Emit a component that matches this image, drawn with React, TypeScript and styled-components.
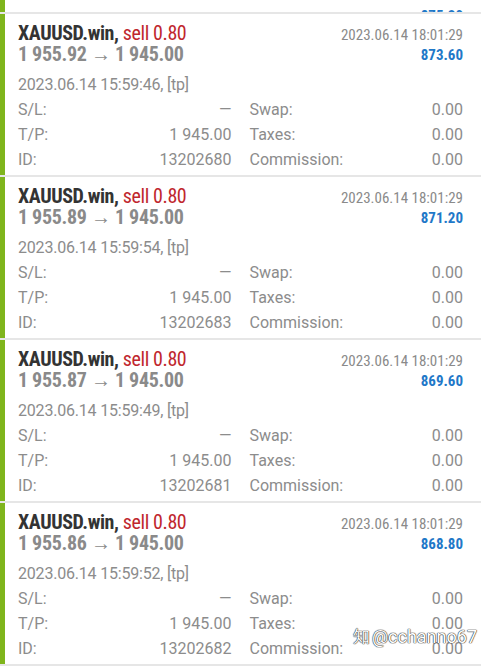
import styled, { createGlobalStyle } from "styled-components";

const Global = createGlobalStyle`
  html, body { margin: 0; padding: 0; background: #fff; }
  body { font-family: Roboto, "Liberation Sans", sans-serif; }
`;

const Page = styled.div`
  position: relative;
  width: 481px;
  height: 668px;
  overflow: hidden;
  background: #fff;
`;

const Card = styled.div<{ $h?: number }>`
  display: flex;
  border-bottom: 2px solid #e6e6e6;
  ${(p) => (p.$h ? `height: ${p.$h}px; overflow: hidden; align-items: flex-end;` : "")}
`;

const Bar = styled.div`
  width: 5px;
  flex: none;
  align-self: stretch;
  background: #7fb51c;
`;

const Body = styled.div`
  flex: 1;
  padding: 9px 18px 3px 13px;
`;

// the card above is scrolled almost out of view, only its last row's feet show
const PartialBody = styled.div`
  flex: 1;
  padding: 0 18px 0 13px;
  margin-bottom: -19px;
`;

const Head = styled.div`
  display: flex;
  justify-content: space-between;
  margin-bottom: 7px;
`;

const Title = styled.div`
  font-family: "Roboto Condensed", "Liberation Sans Narrow", Roboto, sans-serif;
  font-weight: 700;
  font-size: 20px;
  line-height: 21px;
  color: #333;
  letter-spacing: -0.4px;
`;

const Sell = styled.span`
  font-weight: 400;
  color: #c0262d;
`;

const Price = styled.div`
  font-family: "Roboto Condensed", "Liberation Sans Narrow", Roboto, sans-serif;
  font-weight: 700;
  font-size: 20px;
  line-height: 20px;
  color: #8a8a8a;
  letter-spacing: -0.3px;
`;

const Right = styled.div`
  display: flex;
  flex-direction: column;
  align-items: flex-end;
  padding-top: 2px;
`;

const Closed = styled.div`
  font-family: "Roboto Condensed", "Liberation Sans Narrow", Roboto, sans-serif;
  font-size: 15px;
  line-height: 20px;
  color: #8a8a8a;
`;

const Profit = styled.div`
  font-family: "Roboto Condensed", "Liberation Sans Narrow", Roboto, sans-serif;
  font-weight: 700;
  font-size: 15px;
  line-height: 20px;
  color: #1f78c8;
`;

const Line = styled.div`
  font-size: 16px;
  line-height: 25px;
  color: #8c8c8c;
  letter-spacing: -0.2px;
`;

const Grid = styled.div`
  display: grid;
  grid-template-columns: 1fr 1fr;
  column-gap: 18px;
`;

const Cell = styled.div`
  display: flex;
  justify-content: space-between;
  font-size: 16px;
  line-height: 25px;
  color: #8c8c8c;
`;

const Mark = styled.div`
  position: absolute;
  right: 4px;
  bottom: 20px;
  display: flex;
  align-items: center;
  gap: 2px;
  font-family: Roboto, sans-serif;
  font-size: 18px;
  color: #fff;
  text-shadow: 0 0 1px #333, 0 0 1px #333, 0 0 1px #333;
`;

const MarkLogo = styled.span`
  font-size: 17px;
`;

type Deal = {
  open: string;
  close: string;
  time: string;
  openTime: string;
  profit: string;
  id: string;
};

const deals: Deal[] = [
  { open: "1 955.92", close: "1 945.00", time: "2023.06.14 18:01:29", openTime: "2023.06.14 15:59:46", profit: "873.60", id: "13202680" },
  { open: "1 955.89", close: "1 945.00", time: "2023.06.14 18:01:29", openTime: "2023.06.14 15:59:54", profit: "871.20", id: "13202683" },
  { open: "1 955.87", close: "1 945.00", time: "2023.06.14 18:01:29", openTime: "2023.06.14 15:59:49", profit: "869.60", id: "13202681" },
  { open: "1 955.86", close: "1 945.00", time: "2023.06.14 18:01:29", openTime: "2023.06.14 15:59:52", profit: "868.80", id: "13202682" },
];

function DealCard({ d }: { d: Deal }) {
  return (
    <Card>
      <Bar />
      <Body>
        <Head>
          <div>
            <Title>
              XAUUSD.win, <Sell>sell 0.80</Sell>
            </Title>
            <Price>
              {d.open} → {d.close}
            </Price>
          </div>
          <Right>
            <Closed>{d.time}</Closed>
            <Profit>{d.profit}</Profit>
          </Right>
        </Head>
        <Line>{d.openTime}, [tp]</Line>
        <Grid>
          <Cell><span>S/L:</span><span>—</span></Cell>
          <Cell><span>Swap:</span><span>0.00</span></Cell>
          <Cell><span>T/P:</span><span>{d.close}</span></Cell>
          <Cell><span>Taxes:</span><span>0.00</span></Cell>
          <Cell><span>ID:</span><span>{d.id}</span></Cell>
          <Cell><span>Commission:</span><span>0.00</span></Cell>
        </Grid>
      </Body>
    </Card>
  );
}

export default function App() {
  return (
    <Page>
      <Global />
      <Card $h={12}>
        <Bar />
        <PartialBody>
          <Grid>
            <Cell><span>1 955.95 → 1 945.00</span><span /></Cell>
            <Cell><span /><Profit>875.20</Profit></Cell>
          </Grid>
        </PartialBody>
      </Card>
      {deals.map((d) => (
        <DealCard key={d.id} d={d} />
      ))}
      <Mark>
        <MarkLogo>知</MarkLogo>
        <span>@cchanno67</span>
      </Mark>
    </Page>
  );
}
